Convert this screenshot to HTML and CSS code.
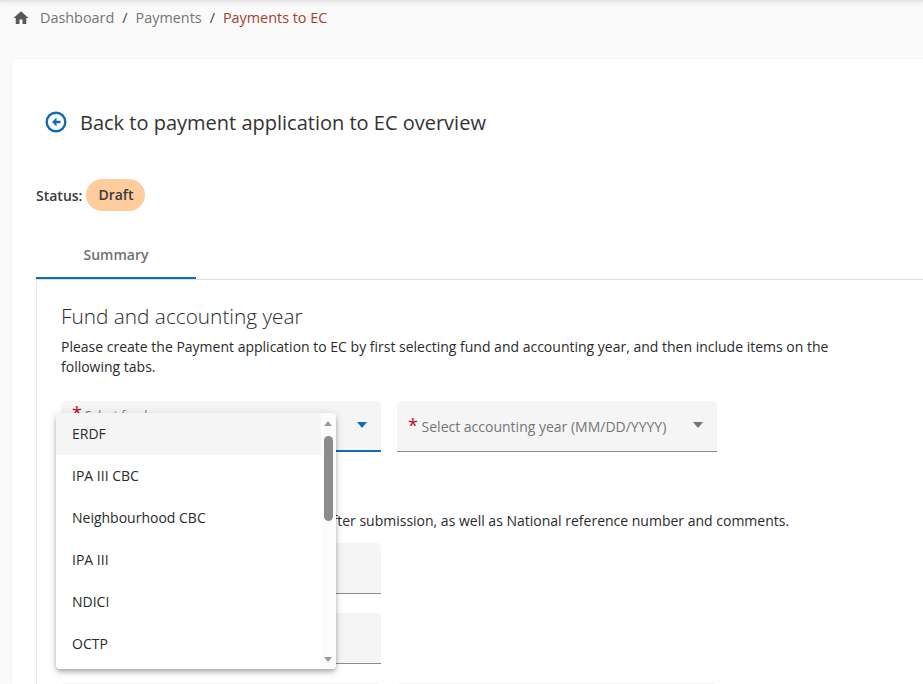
FILE: index.html
```html
<!DOCTYPE html>
<html lang="en">
<head>
<meta charset="utf-8">
<title>Payments to EC</title>
<link rel="stylesheet" href="styles.css">
</head>
<body>
<nav class="breadcrumb">
  <svg class="home" viewBox="0 0 24 24"><path d="M10 20v-6h4v6h5v-8h3L12 3 2 12h3v8z"/></svg>
  <a>Dashboard</a><span class="sep">/</span><a>Payments</a><span class="sep">/</span><span class="current">Payments to EC</span>
</nav>
<main class="card">
  <div class="back">
    <svg class="back-icon" viewBox="0 0 24 24"><path d="M12 1.500a10.500 10.500 0 1 0 0 21 10.500 10.500 0 0 0 0-21zm0 18.600a8.100 8.100 0 1 1 0-16.200 8.100 8.100 0 0 1 0 16.200zM12.500 7.500L8 12l4.500 4.500v-3.300H16.500v-2.400h-4z"/></svg>
    <h1>Back to payment application to EC overview</h1>
  </div>
  <div class="status"><span>Status:</span><span class="pill">Draft</span></div>
  <div class="tabs"><div class="tab">Summary</div></div>
  <section class="panel">
    <h2>Fund and accounting year</h2>
    <p>Please create the Payment application to EC by first selecting fund and accounting year, and then include items on the following tabs.</p>
    <div class="row first-row">
      <div class="field active"><span class="label small"><b>*</b> Select fund</span><i class="caret"></i></div>
      <div class="field"><span class="label"><b>*</b> Select accounting year (MM/DD/YYYY)</span><i class="caret"></i></div>
    </div>
    <h2 class="second">General data</h2>
    <p class="note">Reference number is sent automatically after submission, as well as National reference number and comments.</p>
    <div class="row after-note"><div class="field"></div></div>
    <div class="row"><div class="field"></div></div>
    <div class="row"><div class="field"></div><div class="field"></div></div>
  </section>
  <div class="menu">
    <ul class="options">
      <li class="selected">ERDF</li>
      <li>IPA III CBC</li>
      <li>Neighbourhood CBC</li>
      <li>IPA III</li>
      <li>NDICI</li>
      <li>OCTP</li>
    </ul>
    <div class="scrollbar"><i class="up"></i><i class="thumb"></i><i class="down"></i></div>
  </div>
</main>
</body>
</html>
```
FILE: styles.css
```css
html, body { margin: 0; height: 684px; overflow: hidden; }
body { background: #fafafa; font-family: "Open Sans", sans-serif; font-size: 14px; color: #2b2b2b; box-shadow: inset 0 6px 6px -6px rgba(0,0,0,.2); }
.breadcrumb { height: 59px; box-sizing: border-box; padding: 8px 0 0 12px; display: flex; align-items: flex-start; line-height: 20px; font-size: 14.4px; color: #757575; }
.home { width: 18px; height: 18px; fill: #575757; margin: 1px 10px 0 0; }
.sep { margin: 0 8px; color: #444; }
.current { color: #a5402d; }
.card { position: relative; margin-left: 12px; height: 625px; overflow: hidden; background: #fff; border-radius: 4px 0 0 0; padding: 1px 0 0 24px; box-sizing: border-box; box-shadow: 0 0 2px rgba(0,0,0,.08); }
.back { display: flex; align-items: center; gap: 12px; margin: 47px 0 0 8px; height: 30px; }
.back-icon { width: 24px; height: 24px; fill: #0f6cb6; }
h1 { margin: 0; font-size: 20px; font-weight: 400; color: #333; }
.status { display: flex; align-items: center; gap: 4px; margin-top: 42px; height: 32px; font-weight: 600; color: #3a3a3a; }
.pill { display: block; background: #ffcc9e; height: 32px; line-height: 32px; padding: 0 12px; border-radius: 16px; }
.tabs { margin-top: 21px; border-bottom: 1px solid #ddd; height: 47px; }
.tab { width: 160px; height: 47px; box-sizing: border-box; border-bottom: 2px solid #0f6cb6; text-align: center; line-height: 46px; font-weight: 600; color: #707070; }
.panel { border-left: 1px solid #eee; padding: 22px 0 0 24px; }
h2 { margin: 0; font-size: 20.8px; line-height: 28px; font-weight: 300; }
p { margin: 7px 0 0; line-height: 20px; width: 790px; }
.row { display: flex; gap: 16px; margin-top: 19px; }
.first-row { margin-top: 24px; }
.after-note { margin-top: 12px; }
.field { position: relative; width: 320px; height: 51px; box-sizing: border-box; background: #f5f5f5; border-radius: 4px 4px 0 0; border-bottom: 1px solid #8c8c8c; }
.field.active { border-bottom: 2px solid #0f6cb6; }
.label { position: absolute; left: 11px; top: 16px; color: #757575; white-space: nowrap; }
.label.small { top: 5px; font-size: 12px; }
.label b { color: #c8001e; font-weight: 400; font-size: 18px; line-height: 14px; }
.caret { position: absolute; right: 14px; top: 21px; border: 5px solid transparent; border-top: 6px solid #757575; border-bottom: 0; }
.active .caret { border-top-color: #0f6cb6; }
.second { margin-top: 23px; }
.note { white-space: nowrap; margin-top: 8px; text-indent: 1.5px; }
.menu { position: absolute; left: 44px; top: 354px; width: 280px; height: 256px; background: #fff; border-radius: 4px; box-shadow: 0 2px 4px -1px rgba(0,0,0,.2), 0 4px 5px rgba(0,0,0,.14), 0 1px 10px rgba(0,0,0,.12); display: flex; overflow: hidden; }
.options { list-style: none; margin: 0; padding: 0; flex: 1; }
.options li { height: 42px; line-height: 42px; padding-left: 16px; }
.options .selected { background: #f5f5f5; }
.scrollbar { position: relative; width: 15px; background: #fcfcfc; }
.scrollbar i { position: absolute; display: block; }
.thumb { left: 3px; top: 23px; width: 9px; height: 85px; background: #8c8c8c; border-radius: 5px; }
.up { left: 3px; top: 8px; border: 4px solid transparent; border-bottom: 5px solid #9a9a9a; border-top: 0; }
.down { left: 3px; bottom: 7px; border: 4px solid transparent; border-top: 5px solid #9a9a9a; border-bottom: 0; }
```
